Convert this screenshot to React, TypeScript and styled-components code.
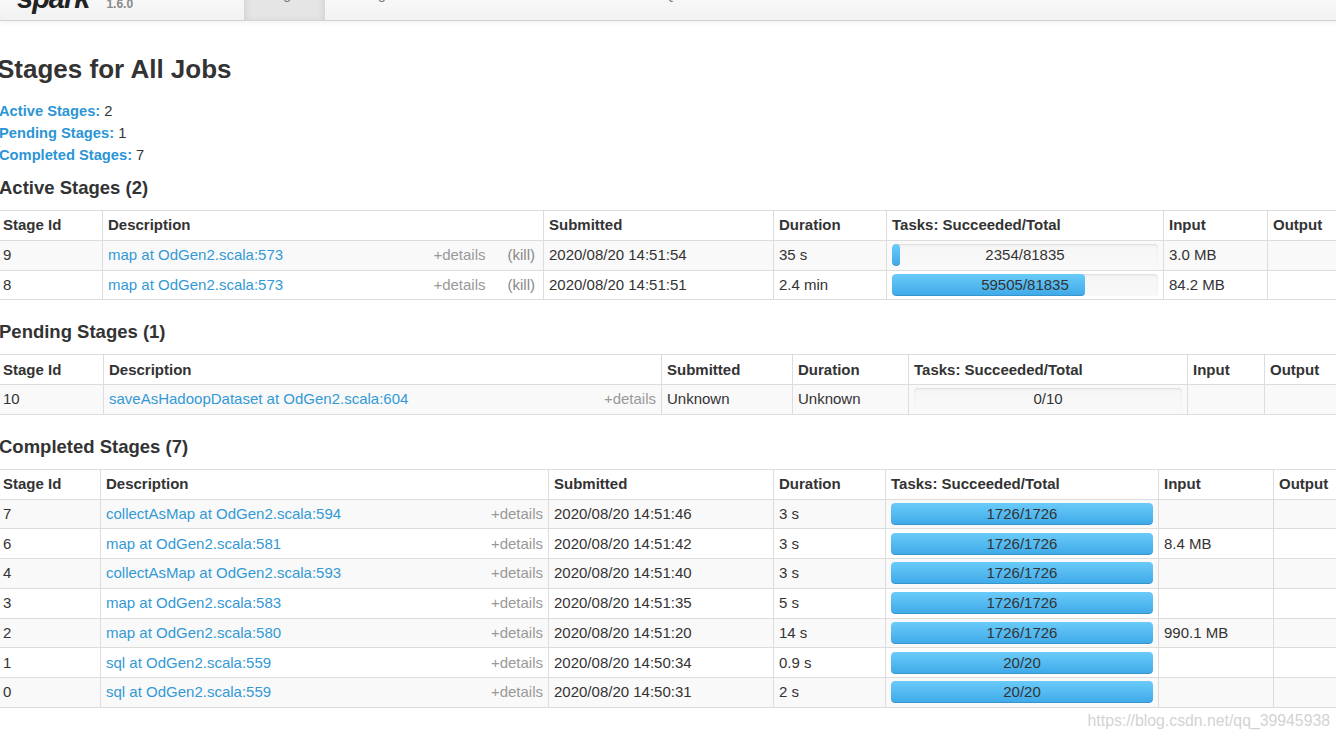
import React from "react";
import styled, { createGlobalStyle } from "styled-components";

const Global = createGlobalStyle`
  html, body { margin: 0; padding: 0; background: #fff; overflow: hidden; }
  body { font-family: "Liberation Sans", Arial, Helvetica, sans-serif; color: #333; font-size: 14px; }
  * { box-sizing: border-box; }
`;

const Page = styled.div`
  width: 1340px;
  height: 739px;
  position: relative;
  overflow: hidden;
`;

const Navbar = styled.div`
  height: 48px;
  margin-top: -27px;
  display: flex;
  align-items: flex-end;
  background: linear-gradient(#ffffff, #f2f2f2);
  border-bottom: 1px solid #d4d4d4;
  box-shadow: 0 1px 5px rgba(0, 0, 0, 0.08);
`;

const Brand = styled.div`
  display: flex;
  align-items: flex-end;
  margin-left: 17px;
  height: 100%;
  width: 157px;
`;

const Logo = styled.span`
  font-family: "Liberation Sans", Arial, sans-serif;
  font-weight: bold;
  font-style: italic;
  font-size: 29px;
  line-height: 29px;
  color: #222;
  letter-spacing: -1px;
  margin-bottom: 7px;
`;

const Version = styled.span`
  font-size: 12px;
  font-weight: bold;
  color: #8a8a8a;
  margin-left: 17px;
  margin-bottom: 9px;
`;

const Tab = styled.div<{ $active?: boolean }>`
  height: 100%;
  padding: 0 20px;
  display: flex;
  align-items: flex-end;
  justify-content: center;
  font-size: 14px;
  color: #777;
  background: ${(p) => (p.$active ? "#e5e5e5" : "transparent")};
  box-shadow: ${(p) => (p.$active ? "inset 0 3px 8px rgba(0,0,0,0.125)" : "none")};
  width: ${(p) => (p.$active ? "81px" : "auto")};
  span { margin-bottom: 19px; line-height: 14px; }
`;

const Content = styled.div`
  margin-left: -3px;
  width: 1403px;
`;

const Title = styled.h3`
  margin: 33px 0 0 0;
  font-size: 26px;
  line-height: 30px;
  font-weight: bold;
  color: #333;
`;

const Summary = styled.ul`
  list-style: none;
  margin: 16px 0 0 0;
  padding: 0 0 0 2px;
  li { line-height: 22px; font-size: 14.7px; }
`;

const SummaryLabel = styled.strong`
  color: #2b95d6;
`;

const SectionTitle = styled.h4<{ $gap: number }>`
  margin: ${(p) => p.$gap}px 0 10px 0;
  padding-left: 2px;
  font-size: 18.5px;
  line-height: 24px;
  font-weight: bold;
  color: #333;
`;

const Table = styled.table`
  width: 1403px;
  table-layout: fixed;
  border-collapse: collapse;
  border-spacing: 0;
  border: 1px solid #ddd;
  font-size: 15px;
  th, td {
    border: 1px solid #ddd;
    padding: 0 5px 0 5px;
    height: 29.75px;
    line-height: 18px;
    text-align: left;
    vertical-align: middle;
    white-space: nowrap;
    overflow: hidden;
  }
  th { font-weight: bold; color: #333; background: #fff; }
  tbody tr:nth-child(odd) td { background: #f9f9f9; }
`;

const DescCell = styled.div`
  display: flex;
  align-items: center;
`;

const Link = styled.span`
  color: #3399d6;
  flex: 1;
`;

const Details = styled.span`
  color: #999;
`;

const Kill = styled.span`
  color: #888;
  margin-left: 22px;
  margin-right: 3px;
`;

const Progress = styled.div`
  position: relative;
  height: 22px;
  border-radius: 4px;
  background: linear-gradient(#f5f5f5, #f9f9f9);
  box-shadow: inset 0 1px 2px rgba(0, 0, 0, 0.1);
  overflow: hidden;
`;

const Fill = styled.div`
  height: 100%;
  border-radius: 4px;
  background: linear-gradient(#6acbf9, #3ea9e8);
  box-shadow: inset 0 -1px 0 rgba(0, 0, 0, 0.12);
`;

const ProgressLabel = styled.span`
  position: absolute;
  inset: 0;
  text-align: center;
  line-height: 22px;
  color: #333;
  font-size: 15px;
`;

const Watermark = styled.div`
  position: absolute;
  right: 10px;
  bottom: 9px;
  font-size: 15.8px;
  color: rgba(195, 195, 195, 0.75);
  font-family: "Liberation Sans", Arial, sans-serif;
`;

type Stage = {
  id: string;
  desc: string;
  kill?: boolean;
  submitted: string;
  duration: string;
  done: number;
  total: number;
  input: string;
};

const headers = ["Stage Id", "Description", "Submitted", "Duration", "Tasks: Succeeded/Total", "Input", "Output"];

function Bar({ done, total }: { done: number; total: number }) {
  const pct = (done / total) * 100;
  return (
    <Progress>
      <Fill style={{ width: `${Math.max(pct, done > 0 ? 2.5 : 0)}%` }} />
      <ProgressLabel>
        {done}/{total}
      </ProgressLabel>
    </Progress>
  );
}

function StageTable({ widths, rows }: { widths: number[]; rows: Stage[] }) {
  return (
    <Table>
      <colgroup>
        {widths.map((w, i) => (
          <col key={i} style={{ width: w }} />
        ))}
      </colgroup>
      <thead>
        <tr>
          {headers.map((h) => (
            <th key={h}>{h}</th>
          ))}
        </tr>
      </thead>
      <tbody>
        {rows.map((r) => (
          <tr key={r.id}>
            <td>{r.id}</td>
            <td>
              <DescCell>
                <Link>{r.desc}</Link>
                <Details>+details</Details>
                {r.kill && <Kill>(kill)</Kill>}
              </DescCell>
            </td>
            <td>{r.submitted}</td>
            <td>{r.duration}</td>
            <td>
              <Bar done={r.done} total={r.total} />
            </td>
            <td>{r.input}</td>
            <td></td>
          </tr>
        ))}
      </tbody>
    </Table>
  );
}

const active: Stage[] = [
  { id: "9", desc: "map at OdGen2.scala:573", kill: true, submitted: "2020/08/20 14:51:54", duration: "35 s", done: 2354, total: 81835, input: "3.0 MB" },
  { id: "8", desc: "map at OdGen2.scala:573", kill: true, submitted: "2020/08/20 14:51:51", duration: "2.4 min", done: 59505, total: 81835, input: "84.2 MB" },
];

const pending: Stage[] = [
  { id: "10", desc: "saveAsHadoopDataset at OdGen2.scala:604", submitted: "Unknown", duration: "Unknown", done: 0, total: 10, input: "" },
];

const completed: Stage[] = [
  { id: "7", desc: "collectAsMap at OdGen2.scala:594", submitted: "2020/08/20 14:51:46", duration: "3 s", done: 1726, total: 1726, input: "" },
  { id: "6", desc: "map at OdGen2.scala:581", submitted: "2020/08/20 14:51:42", duration: "3 s", done: 1726, total: 1726, input: "8.4 MB" },
  { id: "4", desc: "collectAsMap at OdGen2.scala:593", submitted: "2020/08/20 14:51:40", duration: "3 s", done: 1726, total: 1726, input: "" },
  { id: "3", desc: "map at OdGen2.scala:583", submitted: "2020/08/20 14:51:35", duration: "5 s", done: 1726, total: 1726, input: "" },
  { id: "2", desc: "map at OdGen2.scala:580", submitted: "2020/08/20 14:51:20", duration: "14 s", done: 1726, total: 1726, input: "990.1 MB" },
  { id: "1", desc: "sql at OdGen2.scala:559", submitted: "2020/08/20 14:50:34", duration: "0.9 s", done: 20, total: 20, input: "" },
  { id: "0", desc: "sql at OdGen2.scala:559", submitted: "2020/08/20 14:50:31", duration: "2 s", done: 20, total: 20, input: "" },
];

export default function App() {
  return (
    <>
      <Global />
      <Page>
        <Navbar>
          <Brand>
            <Logo>spark</Logo>
            <Version>1.6.0</Version>
          </Brand>
          <Tab>
            <span>Jobs</span>
          </Tab>
          <Tab $active>
            <span>Stages</span>
          </Tab>
          <Tab>
            <span>Storage</span>
          </Tab>
          <Tab>
            <span>Environment</span>
          </Tab>
          <Tab>
            <span>Executors</span>
          </Tab>
          <Tab>
            <span>SQL</span>
          </Tab>
        </Navbar>
        <Content>
          <Title>Stages for All Jobs</Title>
          <Summary>
            <li>
              <SummaryLabel>Active Stages:</SummaryLabel> 2
            </li>
            <li>
              <SummaryLabel>Pending Stages:</SummaryLabel> 1
            </li>
            <li>
              <SummaryLabel>Completed Stages:</SummaryLabel> 7
            </li>
          </Summary>
          <SectionTitle $gap={10}>Active Stages (2)</SectionTitle>
          <StageTable widths={[105, 441, 230, 113, 277, 104, 133]} rows={active} />
          <SectionTitle $gap={20}>Pending Stages (1)</SectionTitle>
          <StageTable widths={[106, 558, 131, 116, 279, 77, 136]} rows={pending} />
          <SectionTitle $gap={20}>Completed Stages (7)</SectionTitle>
          <StageTable widths={[103, 448, 225, 112, 273, 115, 127]} rows={completed} />
        </Content>
        <Watermark>https://blog.csdn.net/qq_39945938</Watermark>
      </Page>
    </>
  );
}
